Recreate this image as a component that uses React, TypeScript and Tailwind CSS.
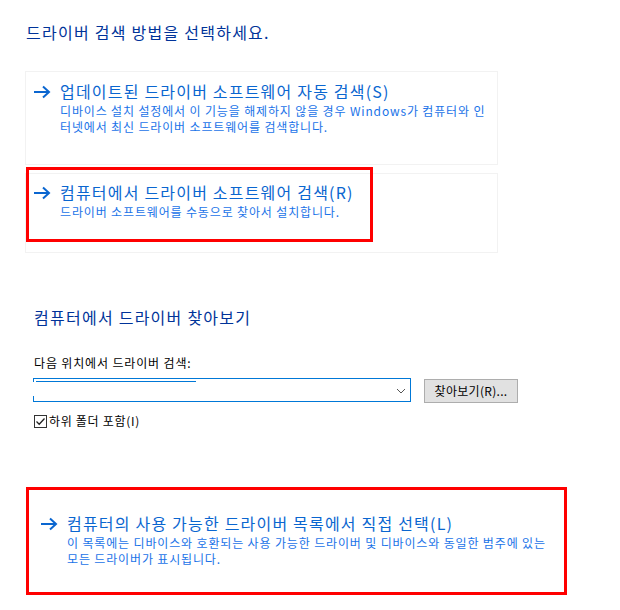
const FONT = "font-['Noto_Sans_CJK_KR','Noto_Sans',sans-serif]";

const Arrow = () => (
  <svg width="18" height="14" viewBox="0 0 18 14" className="shrink-0">
    <path d="M1 7 H16 M10 1.5 L16 7 L10 12.5" fill="none" stroke="#0a66d0" strokeWidth="2" />
  </svg>
);

interface CommandLinkProps {
  title: string;
  lines: string[];
}

const CommandLink = ({ title, lines }: CommandLinkProps) => (
  <div className="flex items-start gap-[9px]">
    <div className="pt-[5px]">
      <Arrow />
    </div>
    <div>
      <div className="text-[16px] leading-[23px] tracking-[1.2px] text-[#0a66d0] whitespace-nowrap">{title}</div>
      {lines.map((l, i) => (
        <div key={i} className="text-[12px] leading-[16px] tracking-[0.85px] text-[#1a73e8] whitespace-nowrap">
          {l}
        </div>
      ))}
    </div>
  </div>
);

export default function App() {
  return (
    <div className={`w-[620px] h-[610px] bg-white overflow-hidden ${FONT}`}>
      <div className="pt-[21px] pl-[26px] text-[16px] leading-[22px] tracking-[1.25px] text-[#003399]">
        드라이버 검색 방법을 선택하세요.
      </div>

      {/* card 1 */}
      <div className="mt-[28px] ml-[25px] w-[473px] h-[94px] border border-[#f2f2f2] pt-[8px] pl-[7px]">
        <CommandLink
          title="업데이트된 드라이버 소프트웨어 자동 검색(S)"
          lines={[
            '디바이스 설치 설정에서 이 기능을 해제하지 않을 경우 Windows가 컴퓨터와 인',
            '터넷에서 최신 드라이버 소프트웨어를 검색합니다.',
          ]}
        />
      </div>

      {/* card 2 */}
      <div className="relative mt-[8px] ml-[25px] w-[473px] h-[80px] border border-[#f2f2f2] pt-[7px] pl-[7px]">
        <CommandLink
          title="컴퓨터에서 드라이버 소프트웨어 검색(R)"
          lines={['드라이버 소프트웨어를 수동으로 찾아서 설치합니다.']}
        />
        <div className="absolute left-0 top-[-7px] w-[347px] h-[75px] border-[3px] border-[#ff0000]" />
      </div>

      <div className="mt-[53px] pl-[34px] text-[16px] leading-[22px] tracking-[1.25px] text-[#003399]">
        컴퓨터에서 드라이버 찾아보기
      </div>

      <div className="mt-[27px] pl-[34px] text-[12px] leading-[16px] tracking-[0.85px] text-black">
        다음 위치에서 드라이버 검색:
      </div>

      <div className="mt-[7px] ml-[33px] flex items-start gap-[13px]">
        <div className="relative w-[378px] h-[24px] border border-[#0078d7] bg-white">
          <div className="mt-[2px] ml-[2px] h-px w-[160px] bg-[#0078d7]" />
          <div className="absolute left-[-1px] top-[3px] w-px h-[14px] bg-white" />
          <svg width="10" height="6" viewBox="0 0 10 6" className="absolute right-[4px] top-[9px]">
            <path d="M1 1 L5 5 L9 1" fill="none" stroke="#555" strokeWidth="1" />
          </svg>
        </div>
        <div className="mt-px w-[94px] h-[24px] border border-[#adadad] bg-[#e1e1e1] flex items-center justify-center text-[12px] tracking-[0.3px] text-black">
          찾아보기(R)...
        </div>
      </div>

      <div className="mt-[10px] ml-[34px] flex items-center gap-[2px]">
        <div className="w-[13px] h-[13px] border border-[#333] bg-white flex items-center justify-center">
          <svg width="11" height="11" viewBox="0 0 11 11">
            <path d="M1.5 5.5 L4.2 8.2 L9.5 2.5" fill="none" stroke="#222" strokeWidth="1.3" />
          </svg>
        </div>
        <div className="text-[12px] leading-[16px] tracking-[0.7px] text-black">하위 폴더 포함(I)</div>
      </div>

      {/* card 3 */}
      <div className="relative mt-[58px] ml-[26px] w-[541px] h-[108px] pt-[25px] pl-[14px]">
        <CommandLink
          title="컴퓨터의 사용 가능한 드라이버 목록에서 직접 선택(L)"
          lines={[
            '이 목록에는 디바이스와 호환되는 사용 가능한 드라이버 및 디바이스와 동일한 범주에 있는',
            '모든 드라이버가 표시됩니다.',
          ]}
        />
        <div className="absolute inset-0 border-[3px] border-[#ff0000]" />
      </div>
    </div>
  );
}
